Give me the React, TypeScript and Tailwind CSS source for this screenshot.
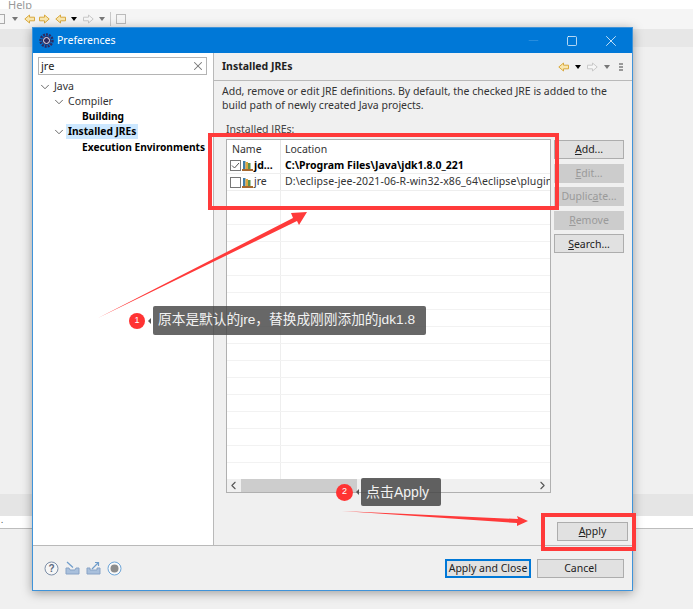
import { ChevronDown, ChevronLeft, ChevronRight, Minus, Square, X } from "lucide-react";

const uiFont = "font-['Noto_Sans','Noto_Sans_CJK_SC',sans-serif]";
const tagFont = "font-['Liberation_Sans','Noto_Sans_CJK_SC',sans-serif]";

function NavArrow({ dir, active }: { dir: "left" | "right"; active: boolean }) {
  const d = dir === "left" ? "M0.8 5 5.5 1v2.2h5v3.6h-5V9z" : "M10.2 5 5.5 1v2.2h-5v3.6h5V9z";
  return (
    <svg width="11" height="10" viewBox="0 0 11 10" className="shrink-0">
      <path d={d} fill={active ? "#f9e7b0" : "#f6f6f6"} stroke={active ? "#d9a93f" : "#c8c8c8"} strokeWidth="1" />
    </svg>
  );
}

function Caret({ dark }: { dark: boolean }) {
  return <div className={`h-0 w-0 shrink-0 border-x-[3px] border-t-[4px] border-x-transparent ${dark ? "border-t-black" : "border-t-[#777]"}`} />;
}

function JreIcon() {
  return (
    <svg width="11" height="11" viewBox="0 0 11 11" className="shrink-0">
      <rect x="1" y="1" width="2.5" height="8" fill="#3f7da8" />
      <rect x="3.5" y="2" width="2.5" height="7" fill="#dca63c" />
      <rect x="6" y="3" width="2.5" height="6" fill="#5c8f4e" />
      <rect x="0" y="9" width="11" height="2" fill="#a5672e" />
    </svg>
  );
}

function Btn({ label, u, disabled, className }: { label: string; u: number; disabled?: boolean; className?: string }) {
  return (
    <div
      className={`flex h-[19px] items-center justify-center whitespace-nowrap border text-[10.5px] leading-none ${
        disabled ? "border-[#cccccc] bg-[#cccccc] text-[#9a9a9a]" : "border-[#adadad] bg-[#e1e1e1] text-[#222]"
      } ${className ?? ""}`}
    >
      <span>
        {label.slice(0, u)}
        <span className="underline">{label[u]}</span>
        {label.slice(u + 1)}
      </span>
    </div>
  );
}

function TreeRow({ indent, label, bold, open, selected }: { indent: number; label: string; bold?: boolean; open?: boolean; selected?: boolean }) {
  return (
    <div className="flex h-[15px] items-center whitespace-nowrap" style={{ paddingLeft: indent }}>
      {open && <ChevronDown size={14} strokeWidth={1.5} className="shrink-0 text-[#555]" />}
      <span className={`px-[2px] leading-[15px] ${bold ? "text-[10.2px] font-bold text-black" : "text-[10.5px] text-[#333]"} ${selected ? "bg-[#cde8ff]" : ""}`}>{label}</span>
    </div>
  );
}

function FooterIcons() {
  return (
    <div className="flex items-center gap-[6px]">
      <svg width="15" height="15" viewBox="0 0 15 15">
        <circle cx="7.5" cy="7.5" r="6.5" fill="#f6f6f6" stroke="#7d8fa8" />
        <text x="7.5" y="11" textAnchor="middle" fontSize="10" fontWeight="700" fill="#5c6a80" fontFamily="Liberation Sans">?</text>
      </svg>
      <svg width="15" height="14" viewBox="0 0 15 14">
        <path d="M1 7h3l1 2h5l1-2h3v6H1z" fill="#a9c0dc" stroke="#88a3c6" />
        <path d="M2 1l6 5.5" stroke="#6f9cca" strokeWidth="1.2" />
      </svg>
      <svg width="15" height="14" viewBox="0 0 15 14">
        <path d="M1 7h3v2h7V7h3v6H1z" fill="#a9c0dc" stroke="#88a3c6" />
        <path d="M6 8l6-6M9 1.5h3.5V5" stroke="#6f9cca" strokeWidth="1.2" fill="none" />
      </svg>
      <svg width="15" height="15" viewBox="0 0 15 15">
        <circle cx="7.5" cy="7.5" r="6.5" fill="#fafafa" stroke="#6da5d8" />
        <circle cx="7.5" cy="7.5" r="4" fill="#8c8c8c" />
      </svg>
    </div>
  );
}

const emptyRows = Array.from({ length: 17 });

export default function App() {
  return (
    <div className={`relative h-[609px] w-[693px] overflow-hidden bg-[#f0f0f0] ${uiFont}`}>
      {/* workbench behind the dialog */}
      <div className="flex h-[9px] items-center overflow-hidden bg-white pl-[8px] text-[11px] leading-none text-[#999]">Help</div>
      <div className="flex h-[20px] items-center bg-[#f5f5f5]">
        <div className="h-[10px] w-[5px] shrink-0 border-y border-r border-[#aaa]" />
        <div className="ml-[7px] flex items-center">
          <Caret dark={false} />
        </div>
        <div className="ml-[6px]"><NavArrow dir="left" active /></div>
        <div className="ml-[4px]"><NavArrow dir="right" active /></div>
        <div className="ml-[5px]"><NavArrow dir="left" active /></div>
        <div className="ml-[5px]"><Caret dark /></div>
        <div className="ml-[6px]"><NavArrow dir="right" active={false} /></div>
        <div className="ml-[5px]"><Caret dark={false} /></div>
        <div className="ml-[5px] h-[14px] w-px bg-[#c8c8c8]" />
        <div className="ml-[5px] h-[10px] w-[10px] border border-[#bbb]" />
      </div>
      <div className="h-[18px] bg-[#e7e7e7]" />
      <div className="h-[447px]" />
      <div className="h-[22px] bg-[#e5e5e5]" />
      <div className="h-[13px] border-b border-[#bdbdbd] bg-white pl-px text-[8px] leading-[8px] text-[#333]">.</div>

      {/* preferences window */}
      <div className="absolute left-[32px] top-[27px] flex h-[564px] w-[601px] flex-col border border-[#3f93d9] bg-[#f0f0f0] shadow-[0_2px_10px_rgba(0,0,0,0.35)]">
        <div className="flex h-[25px] shrink-0 items-center bg-[#0078d7] pl-[6px] text-white">
          <svg width="15" height="15" viewBox="0 0 15 15">
            <circle cx="7.5" cy="7.5" r="6" fill="none" stroke="#2f2a5e" strokeWidth="2.4" strokeDasharray="2 1" />
            <circle cx="7.5" cy="7.5" r="4.4" fill="#2f2a5e" />
            <circle cx="7.5" cy="7.5" r="3" fill="none" stroke="#e8e8f0" strokeWidth="1" />
          </svg>
          <span className="ml-[3px] text-[10.5px]">Preferences</span>
          <div className="ml-auto flex items-center">
            <Minus size={15} strokeWidth={1} className="mr-[25px] text-[#3f9ae2]" />
            <Square size={12} strokeWidth={1.4} className="mr-[24px]" />
            <X size={18} strokeWidth={1} className="mr-[12px]" />
          </div>
        </div>

        <div className="flex min-h-0 flex-1">
          {/* left tree */}
          <div className="w-[181px] shrink-0 border-r border-[#b9b9b9] bg-white pl-[5px] pr-[6px] pt-[4px]">
            <div className="flex h-[18px] items-center justify-between border border-[#b4b4b4] pl-[2px] pr-[1px] text-[11px] text-[#222]">
              <span>jre</span>
              <X size={14} strokeWidth={1.8} className="text-[#777]" />
            </div>
            <div className="mt-[4px]">
              <TreeRow indent={0} label="Java" open />
              <TreeRow indent={14} label="Compiler" open />
              <TreeRow indent={42} label="Building" bold />
              <TreeRow indent={14} label="Installed JREs" bold open selected />
              <div className="mt-px">
                <TreeRow indent={42} label="Execution Environments" bold />
              </div>
            </div>
          </div>

          {/* right page */}
          <div className="flex min-w-0 flex-1 flex-col">
            <div className="flex h-[28px] shrink-0 items-center border-b border-[#b9b9b9] pl-[8px] pr-[9px]">
              <span className="text-[10.5px] font-bold text-[#222]">Installed JREs</span>
              <div className="ml-auto flex items-center gap-[6px]">
                <NavArrow dir="left" active />
                <Caret dark />
                <NavArrow dir="right" active={false} />
                <Caret dark={false} />
                <div className="ml-[3px] flex flex-col gap-px">
                  <div className="h-[2px] w-[4px] bg-[#999]" />
                  <div className="h-[2px] w-[4px] bg-[#999]" />
                  <div className="h-[2px] w-[4px] bg-[#999]" />
                </div>
              </div>
            </div>

            <div className="flex min-h-0 flex-1 flex-col pl-[8px] pr-[8px]">
              <p className="mt-[3px] whitespace-nowrap text-[10.5px] leading-[14px] text-[#333]">
                Add, remove or edit JRE definitions. By default, the checked JRE is added to the
                <br />
                build path of newly created Java projects.
              </p>
              <div className="mt-[10px] pl-[4px] text-[10.5px] leading-[14px] text-[#444]">Installed JREs:</div>
              <div className="mt-[3px] flex">
                {/* table */}
                <div className="ml-[4px] flex h-[354px] w-[325px] shrink-0 flex-col border border-[#b0b0b0] bg-white">
                  <div className="flex h-[18px] shrink-0 items-center text-[10.5px] text-[#333]">
                    <div className="flex h-full w-[54px] items-center border-r border-[#e4e4e4] pl-[5px] pt-px">Name</div>
                    <div className="pl-[4px] pt-px">Location</div>
                  </div>
                  <div className="min-h-0 flex-1 overflow-hidden">
                    <div className="flex h-[16px] items-center border-b border-[#eeeeee] text-[10.5px]">
                      <div className="flex h-full w-[54px] shrink-0 items-center gap-[1px] border-r border-[#e4e4e4] pl-[3px]">
                        <svg width="11" height="11" viewBox="0 0 11 11" className="shrink-0">
                          <rect x="0.5" y="0.5" width="10" height="10" fill="#fff" stroke="#777" />
                          <path d="M2 5.5l2.5 2.5L9 3" fill="none" stroke="#555" />
                        </svg>
                        <JreIcon />
                        <span className="font-bold text-black">jd...</span>
                      </div>
                      <div className="truncate pl-[4px] font-bold text-black">C:\Program Files\Java\jdk1.8.0_221</div>
                    </div>
                    <div className="flex h-[17px] items-center border-b border-[#eeeeee] text-[10.5px] text-[#333]">
                      <div className="flex h-full w-[54px] shrink-0 items-center gap-[1px] border-r border-[#e4e4e4] pl-[3px]">
                        <div className="h-[11px] w-[11px] shrink-0 border border-[#777] bg-white" />
                        <JreIcon />
                        <span>jre</span>
                      </div>
                      <div className="overflow-hidden whitespace-nowrap pl-[4px] tracking-[0.1px]">D:\eclipse-jee-2021-06-R-win32-x86_64\eclipse\plugins</div>
                    </div>
                    {emptyRows.map((_, i) => (
                      <div key={i} className="h-[17px] border-b border-[#f2f2f2]">
                        <div className="h-full w-[54px] border-r border-[#eeeeee]" />
                      </div>
                    ))}
                  </div>
                  <div className="flex h-[13px] shrink-0 items-center bg-[#f0f0f0] text-[#555]">
                    <ChevronLeft size={13} strokeWidth={2} />
                    <div className="ml-[1px] h-full w-[116px] bg-[#cdcdcd]" />
                    <ChevronRight size={13} strokeWidth={2} className="ml-auto mr-px" />
                  </div>
                </div>
                {/* side buttons */}
                <div className="ml-[3px] flex flex-1 flex-col gap-[4.6px] pt-[1px]">
                  <Btn label="Add..." u={0} />
                  <Btn label="Edit..." u={0} disabled />
                  <Btn label="Duplicate..." u={6} disabled />
                  <Btn label="Remove" u={0} disabled />
                  <Btn label="Search..." u={0} />
                </div>
              </div>
              <div className="mt-[29px] flex justify-end">
                <Btn label="Apply" u={0} className="mr-[-4px] w-[71px]" />
              </div>
            </div>
          </div>
        </div>

        {/* footer */}
        <div className="flex h-[45px] shrink-0 items-center border-t border-[#b9b9b9] pl-[11px] pr-[8px]">
          <FooterIcons />
          <Btn label="Apply and Close" u={99} className="ml-auto w-[86px] !border-[#0078d7] !border-2" />
          <Btn label="Cancel" u={99} className="ml-[6px] w-[87px]" />
        </div>
      </div>

      {/* red annotation boxes */}
      <div className="absolute left-[208px] top-[133px] h-[77px] w-[351px] border-[4px] border-[#ff3a3a]" />
      <div className="absolute left-[541px] top-[513px] h-[38px] w-[95px] border-[4px] border-[#ff3a3a]" />

      {/* red arrows */}
      <svg className="absolute left-0 top-0" width="693" height="609" viewBox="0 0 693 609">
        <path d="M98 318 L293 218 L291 213 L307 212 L299 225 L297 221 Z" fill="#ff3a3a" />
        <path d="M342 511 L518 519 L517 516 L528 521 L517 526 L517 523 Z" fill="#ff3a3a" />
      </svg>

      {/* annotation tags */}
      <div className={`absolute left-[129px] top-[306px] flex items-center ${tagFont}`}>
        <div className="flex h-[16px] w-[16px] items-center justify-center rounded-full bg-[#ff3333] text-[9px] text-white">1</div>
        <div className="ml-[3px] h-0 w-0 border-y-[3px] border-r-[3px] border-y-transparent border-r-[#555]" />
        <div className="ml-[2px] flex h-[29px] w-[273px] items-center whitespace-nowrap rounded-[2px] bg-[rgba(70,70,70,0.82)] pl-[5px] text-[13.7px] text-[#f2f2f2]">原本是默认的jre，替换成刚刚添加的jdk1.8</div>
      </div>
      <div className={`absolute left-[336px] top-[478px] flex items-center ${tagFont}`}>
        <div className="flex h-[17px] w-[17px] items-center justify-center rounded-full bg-[#ff3333] text-[9px] text-white">2</div>
        <div className="ml-[3px] h-0 w-0 border-y-[3px] border-r-[3px] border-y-transparent border-r-[#555]" />
        <div className="ml-[2px] flex h-[28px] w-[80px] items-center whitespace-nowrap rounded-[2px] bg-[rgba(70,70,70,0.85)] pl-[5px] text-[14px] text-[#f2f2f2]">点击Apply</div>
      </div>
    </div>
  );
}
